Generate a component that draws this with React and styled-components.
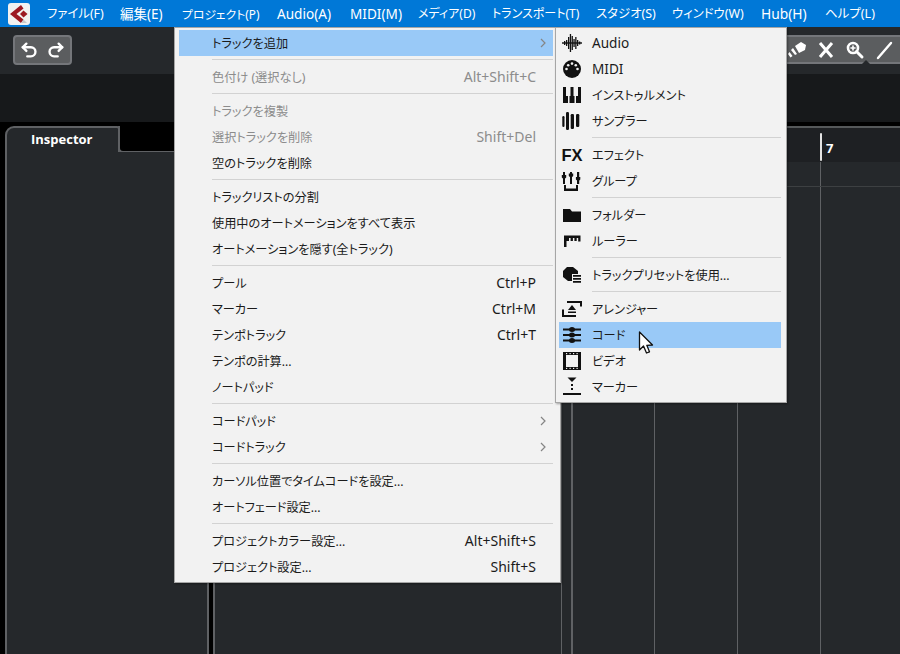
import React from "react";
import styled, { createGlobalStyle } from "styled-components";

const Global = createGlobalStyle`
  html, body { margin: 0; padding: 0; height: 100%; overflow: hidden; background: #000; }
  #root { height: 100%; }
`;

const FONT = `"Noto Sans", "Noto Sans CJK JP", sans-serif`;

const Root = styled.div`
  position: relative;
  width: 900px;
  height: 654px;
  overflow: hidden;
  display: flex;
  flex-direction: column;
  font-family: ${FONT};
  font-size: 13px;
`;

const MenuBar = styled.div`
  flex: 0 0 27px;
  display: flex;
  align-items: center;
  background: #0078d7;
  padding-left: 8px;
`;

const LogoBox = styled.svg`
  width: 22px;
  height: 22px;
  margin-right: 17px;
  flex: none;
`;

const BarItem = styled.div`
  flex: 0 0 ${(p) => p.$w}px;
  color: #fff;
  font-size: ${(p) => p.$fs}px;
  font-feature-settings: "palt";
  white-space: nowrap;
  line-height: 26px;
`;

const Toolbar = styled.div`
  flex: 0 0 47px;
  background: #25282b;
  display: flex;
  justify-content: space-between;
  align-items: flex-start;
  padding: 8px 0 0 13px;
  box-sizing: border-box;
`;

const ToolGroup = styled.div`
  height: 30px;
  box-sizing: border-box;
  background: #5b5d5f;
  border: 2px solid #74767a;
  border-radius: 4px;
  display: flex;
  align-items: center;
  color: #fff;
`;

const UndoGroup = styled(ToolGroup)`
  width: 59px;
  justify-content: space-around;
  padding: 0 3px;
`;

const ModeGroup = styled(ToolGroup)`
  position: relative;
  width: 130px;
  height: 29px;
  border-radius: 0;
  border-right: none;
  justify-content: flex-end;
  gap: 7px;
  padding-right: 5px;
`;

const Notch = styled.span`
  position: absolute;
  left: 90px;
  bottom: -2px;
  width: 0;
  height: 0;
  border-left: 4px solid transparent;
  border-right: 4px solid transparent;
  border-bottom: 4px solid #25282b;
`;

const Band = styled.div`
  flex: 0 0 48px;
  background: #17191b;
`;

const Workspace = styled.div`
  flex: 1;
  min-height: 0;
  display: flex;
  background: #000;
  padding-top: 4px;
`;

const InspectorPane = styled.div`
  flex: 0 0 204px;
  margin-left: 5px;
  display: flex;
  flex-direction: column;
`;

const TabRow = styled.div`
  flex: 0 0 27px;
  display: flex;
`;

const Tab = styled.div`
  flex: 0 0 115px;
  box-sizing: border-box;
  background: #25282b;
  border: 2px solid #5f6164;
  border-bottom: none;
  border-radius: 9px 3px 0 0;
  color: #fff;
  font-weight: 700;
  font-size: 13px;
  text-align: left;
  padding-left: 24px;
  line-height: 23px;
  font-family: "Open Sans", sans-serif;
`;

const TabFill = styled.div`
  flex: 1;
  box-sizing: border-box;
  border-bottom: 2px solid #5f6164;
  border-left: 2px solid #5f6164;
  border-radius: 0 0 0 5px;
  margin-left: -2px;
`;

const InspectorBody = styled.div`
  flex: 1;
  background: #25282b;
  border-left: 2px solid #5f6164;
  border-right: 2px solid #5f6164;
  margin-top: -1px;
`;

const TrackPane = styled.div`
  flex: 0 0 346px;
  margin-left: 4px;
  background: #25282b;
  border-left: 2px solid #5f6164;
  border-right: 1px solid #5f6164;
`;

const Project = styled.div`
  flex: 1;
  min-width: 0;
  display: flex;
  flex-direction: column;
  background: #25282b;
  border-top: 2px solid #55585a;
  overflow: hidden;
`;

const Spacer = styled.div`
  flex: 0 0 9px;
`;

const ProjectRow = styled.div`
  display: flex;
  flex: ${(p) => (p.$grow ? "1" : `0 0 ${p.$h}px`)};
  background: ${(p) => p.$bg};
  border-bottom: ${(p) => (p.$line ? "1px solid #3d4042" : "none")};
`;

const Bar = styled.div`
  flex: 0 0 83px;
  box-sizing: border-box;
  height: 100%;
  position: relative;
  border-left: ${(p) => (p.$major ? "2px solid #5f6164" : "1px solid #5f6164")};
`;

const RulerBar = styled.div`
  flex: 0 0 83px;
  box-sizing: border-box;
  display: flex;
  align-items: center;
  padding: 5px 0 0 0;
`;

const Tick = styled.span`
  display: block;
  width: 2px;
  height: 28px;
  margin-top: -1px;
  background: #e4e4e4;
  border-radius: 1px;
`;

const BarNumber = styled.span`
  margin-left: 4px;
  color: #fff;
  font-family: "Open Sans", sans-serif;
  font-weight: 700;
  font-size: 13px;
`;

const Menu = styled.div`
  position: absolute;
  top: 27px;
  left: ${(p) => p.$left}px;
  width: ${(p) => p.$width}px;
  box-sizing: border-box;
  background: #f2f2f2;
  border: 1px solid #a6a6a6;
  box-shadow: 1px 1px 2px rgba(0, 0, 0, 0.35);
  padding: 2px ${(p) => p.$pr}px 2px ${(p) => p.$pl}px;
  font-feature-settings: "palt";
`;

const Row = styled.div`
  height: 26px;
  display: flex;
  align-items: center;
  box-sizing: border-box;
  padding-left: 33px;
  position: relative;
  background: ${(p) => (p.$hl ? "#99c9f7" : "transparent")};
  color: ${(p) => (p.$off ? "#8c8c8c" : "#1b1b1b")};
  white-space: nowrap;
`;

const Label = styled.span`
  flex: 1;
  font-size: ${(p) => (p.$latin ? "13.6px" : "12.2px")};
  margin-top: ${(p) => (p.$latin ? "-2px" : "0")};
`;

const Shortcut = styled.span`
  margin-right: 17px;
  margin-top: -2px;
  font-size: 14px;
`;

const Chevron = styled.svg`
  position: absolute;
  right: 6px;
  top: 8px;
  width: 8px;
  height: 10px;
`;

const Sep = styled.div`
  height: 8px;
  display: flex;
  align-items: center;
  padding-left: ${(p) => p.$inset}px;
  &::after {
    content: "";
    display: block;
    flex: 1;
    height: 1px;
    background: #d2d2d2;
    margin-top: -2px;
  }
`;

const IconSlot = styled.span`
  position: absolute;
  left: 2px;
  top: 3px;
  width: 22px;
  height: 20px;
  display: flex;
  align-items: center;
  justify-content: center;
`;

const FxText = styled.span`
  font-family: "Liberation Sans", sans-serif;
  font-weight: 700;
  font-size: 16.5px;
  color: #111;
`;

const CursorSvg = styled.svg`
  position: absolute;
  left: 638px;
  top: 331px;
  width: 17px;
  height: 24px;
`;

const I = ({ children }) => (
  <svg width="22" height="20" viewBox="0 0 22 20" fill="#111">{children}</svg>
);

const icons = {
  audio: (
    <I>
      <rect x="1" y="9.300" width="20" height="1.400" />
      {[[3, 2], [5, 3], [7, 6], [8.800, 9], [10.600, 7], [12.400, 4], [14.200, 6], [16, 3], [18, 1.500]].map(([x, h]) => (
        <rect key={x} x={x} y={10 - h} width="1.300" height={h * 2} />
      ))}
    </I>
  ),
  midi: (
    <I>
      <circle cx="11" cy="10" r="9" />
      <g fill="#f2f2f2">
        <circle cx="5.500" cy="10" r="1.300" />
        <circle cx="7.200" cy="6.200" r="1.300" />
        <circle cx="11" cy="4.600" r="1.300" />
        <circle cx="14.800" cy="6.200" r="1.300" />
        <circle cx="16.500" cy="10" r="1.300" />
      </g>
    </I>
  ),
  instrument: (
    <I>
      <path d="M2 2h3v9h2v7H2zM9.500 2h3v9h1v7h-5v-7h1zM17 2h3v16h-5v-7h2z" />
    </I>
  ),
  sampler: (
    <I>
      {[[1.300, 2.200, 5, 11], [5, 3, 1, 18], [9.700, 3.300, 3, 15], [15, 3.300, 3, 13]].map(([x, w, y, h]) => (
        <rect key={x} x={x} y={y} width={w} height={h} rx="1.200" />
      ))}
    </I>
  ),
  group: (
    <I>
      <path d="M2 1h2v12H2zM9 1h2v12H9zM16 1h2.200v12H16z" />
      <path d="M0.800 4h4.400v2.500L3 8.500 0.800 6.500zM7.800 2.500h4.400V5L10 7 7.800 5zM14.900 6h4.400v2.500L17.100 10.500l-2.200-2z" />
      <path d="M3 14h2v3.500h10V14h2v6H3z" />
    </I>
  ),
  folder: (
    <I>
      <path d="M2 4h7l2 2.500h9V17H2z" />
    </I>
  ),
  ruler: (
    <I>
      <path d="M3 4.500h16.500v6h-2.300V7h-1.500v3h-2.300V7h-1.500v3H9.600V7H8v3H5.500v6H3z" />
    </I>
  ),
  preset: (
    <I>
      <path d="M6 2h6l5 4v3h-6v7H7l-5-4V6z" />
      <path d="M12 10h8v1.700h-8zM12 13h8v1.700h-8zM12 16h8v1.700h-8z" />
    </I>
  ),
  arranger: (
    <I>
      <path d="M6 2h15v5.500h-2V4H6zM1 10.500h2V16h12v2H1z" />
      <path d="M11 6l4 5H7z" />
      <path d="M7 12.500h8V14H7z" />
    </I>
  ),
  chord: (
    <I>
      <path d="M2 3.500h18v2H2zM2 9h18v2H2zM2 14.500h18v2H2z" />
      <ellipse cx="11" cy="4.500" rx="3" ry="2.500" />
      <ellipse cx="11" cy="10" rx="3" ry="2.500" />
      <ellipse cx="11" cy="15.500" rx="3" ry="2.500" />
    </I>
  ),
  video: (
    <I>
      <path fillRule="evenodd" d="M2 1h18v18H2zM5 4v12h12V4z" />
      <g fill="#f2f2f2">
        {[5.500, 9, 12.500, 16].map((x) => (
          <g key={x}>
            <rect x={x - 0.5} y="2" width="1.200" height="1.200" />
            <rect x={x - 0.5} y="16.800" width="1.200" height="1.200" />
          </g>
        ))}
      </g>
    </I>
  ),
  marker: (
    <I>
      <path d="M6.500 0.500h9L11 5z" />
      <rect x="10" y="7" width="2" height="2" />
      <rect x="10" y="11" width="2" height="2" />
      <rect x="2" y="16" width="18" height="2" />
    </I>
  ),
};

const main = [
  { t: "トラックを追加", hl: true, sub: true },
  "-",
  { t: "色付け (選択なし)", off: true, k: "Alt+Shift+C" },
  "-",
  { t: "トラックを複製", off: true },
  { t: "選択トラックを削除", off: true, k: "Shift+Del" },
  { t: "空のトラックを削除" },
  "-",
  { t: "トラックリストの分割" },
  { t: "使用中のオートメーションをすべて表示" },
  { t: "オートメーションを隠す(全トラック)" },
  "-",
  { t: "プール", k: "Ctrl+P" },
  { t: "マーカー", k: "Ctrl+M" },
  { t: "テンポトラック", k: "Ctrl+T" },
  { t: "テンポの計算..." },
  { t: "ノートパッド" },
  "-",
  { t: "コードパッド", sub: true },
  { t: "コードトラック", sub: true },
  "-",
  { t: "カーソル位置でタイムコードを設定..." },
  { t: "オートフェード設定..." },
  "-",
  { t: "プロジェクトカラー設定...", k: "Alt+Shift+S" },
  { t: "プロジェクト設定...", k: "Shift+S" },
];

const submenu = [
  { t: "Audio", i: "audio", latin: true },
  { t: "MIDI", i: "midi", latin: true },
  { t: "インストゥルメント", i: "instrument" },
  { t: "サンプラー", i: "sampler" },
  "-",
  { t: "エフェクト", fx: true },
  { t: "グループ", i: "group" },
  "-",
  { t: "フォルダー", i: "folder" },
  { t: "ルーラー", i: "ruler" },
  "-",
  { t: "トラックプリセットを使用...", i: "preset" },
  "-",
  { t: "アレンジャー", i: "arranger" },
  { t: "コード", i: "chord", hl: true },
  { t: "ビデオ", i: "video" },
  { t: "マーカー", i: "marker" },
];

const bar = [
  ["ファイル(F)", 73, 12.4],
  ["編集(E)", 62, 13.5],
  ["プロジェクト(P)", 95, 11.8],
  ["Audio(A)", 73, 13.6],
  ["MIDI(M)", 68, 13.6],
  ["メディア(D)", 74, 12],
  ["トランスポート(T)", 104, 12],
  ["スタジオ(S)", 76, 12.4],
  ["ウィンドウ(W)", 89, 12.4],
  ["Hub(H)", 64, 13.8],
  ["ヘルプ(L)", 70, 12.5],
];

const Logo = () => (
  <LogoBox viewBox="0 0 22 22">
    <rect width="22" height="22" rx="3" fill="#f1f1f1" />
    <path d="M13 2 L2 11 L13 20 L15.500 16.500 L8.500 11 L15.500 5.500 Z" fill="#9c1822" />
    <path d="M15.500 7.500 L19.500 11 L15.500 14.500 L12 11 Z" fill="#9c1822" />
    <path d="M15.500 16.500 L13 20 L19 20 Z" fill="#c9c9c9" />
  </LogoBox>
);

const Tool = ({ children, w = 22 }) => (
  <svg width={w} height="20" viewBox="0 0 22 20" fill="none" stroke="#fff" strokeWidth="2.600" strokeLinecap="round" strokeLinejoin="round">
    {children}
  </svg>
);

const renderRows = (rows, inset, withIcons) =>
  rows.map((r, i) =>
    r === "-" ? (
      <Sep key={i} $inset={inset} />
    ) : (
      <Row key={i} $hl={r.hl} $off={r.off}>
        {withIcons && (
          <IconSlot>{r.fx ? <FxText>FX</FxText> : icons[r.i]}</IconSlot>
        )}
        <Label $latin={r.latin}>{r.t}</Label>
        {r.k && <Shortcut>{r.k}</Shortcut>}
        {r.sub && (
          <Chevron viewBox="0 0 8 10" fill="none" stroke="#858585" strokeWidth="1.200">
            <path d="M2 1l4 4-4 4" />
          </Chevron>
        )}
      </Row>
    )
  );

export default function App() {
  return (
    <Root>
      <Global />
      <MenuBar>
        <Logo />
        {bar.map(([t, w, fs]) => (
          <BarItem key={t} $w={w} $fs={fs}>{t}</BarItem>
        ))}
      </MenuBar>
      <Toolbar>
        <UndoGroup>
          <Tool w={20}>
            <path d="M7 3 3 7l4 4" />
            <path d="M3 7h9a5 5 0 0 1 0 10H8" />
          </Tool>
          <Tool w={20}>
            <path d="M15 3l4 4-4 4" />
            <path d="M19 7h-9a5 5 0 0 0 0 10h4" />
          </Tool>
        </UndoGroup>
        <ModeGroup>
          <svg width="22" height="20" viewBox="0 0 22 20">
            <path d="M9 6l6-4 5 3-1 5-6 3z" fill="#fff" />
            <path d="M7 8l4 6-2 1-4-5zM3.500 12l3 4-2 1.500-2.500-3.500z" fill="#fff" />
          </svg>
          <Tool>
            <path d="M5 3l12 14M17 3 5 17" strokeWidth="3" strokeLinecap="butt" />
          </Tool>
          <Tool>
            <circle cx="9" cy="8" r="5" />
            <path d="M12.500 11.500 18 17" strokeWidth="3" />
            <path d="M7 8h4M9 6v4" strokeWidth="1.600" />
          </Tool>
          <Tool>
            <path d="M5 18 18 3" strokeWidth="2.400" />
          </Tool>
          <Notch />
        </ModeGroup>
      </Toolbar>
      <Band />
      <Workspace>
        <InspectorPane>
          <TabRow>
            <Tab>Inspector</Tab>
            <TabFill />
          </TabRow>
          <InspectorBody />
        </InspectorPane>
        <TrackPane />
        <Project>
          <ProjectRow $h={34} $bg="#1e2023">
            <Spacer />
            <RulerBar />
            <RulerBar />
            <RulerBar />
            <RulerBar>
              <Tick />
              <BarNumber>7</BarNumber>
            </RulerBar>
          </ProjectRow>
          <ProjectRow $h={24} $bg="#25282b" $line>
            <Spacer />
            <Bar $major />
            <Bar />
            <Bar />
            <Bar />
          </ProjectRow>
          <ProjectRow $grow $bg="#25282b">
            <Spacer />
            <Bar $major />
            <Bar />
            <Bar />
            <Bar />
          </ProjectRow>
        </Project>
      </Workspace>
      <Menu $left={174} $width={387} $pl={4} $pr={7}>
        {renderRows(main, 33, false)}
      </Menu>
      <Menu $left={555} $width={232} $pl={3} $pr={5}>
        {renderRows(submenu, 33, true)}
      </Menu>
      <CursorSvg viewBox="0 0 17 24">
        <path d="M1.500 1 V19 L5.500 15 L8.500 22 L11.500 20.800 L8.800 14.300 L14.500 14 Z" fill="#fff" stroke="#111" strokeWidth="1.300" strokeLinejoin="round" />
      </CursorSvg>
    </Root>
  );
}
